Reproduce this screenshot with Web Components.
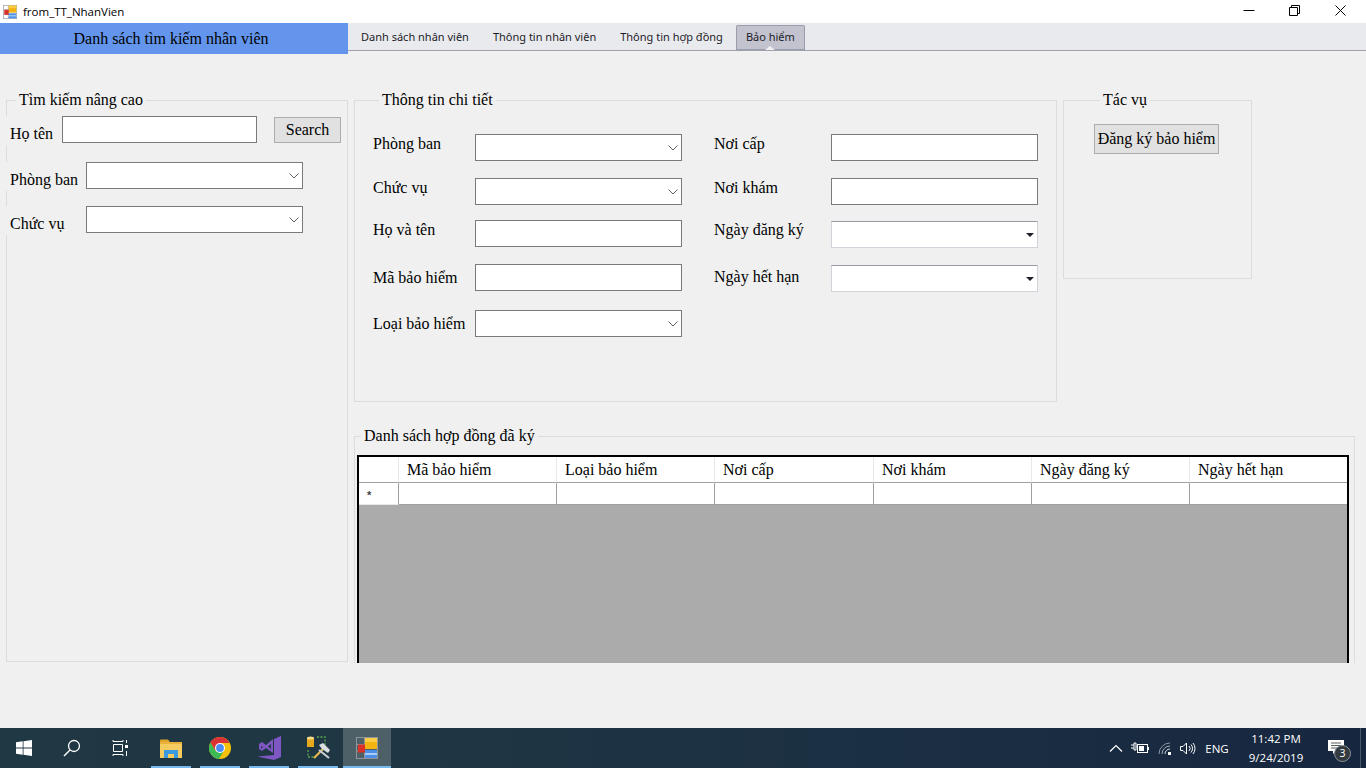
<!DOCTYPE html>
<html lang="vi">
<head>
<meta charset="utf-8">
<title>from_TT_NhanVien</title>
<style>
html,body{margin:0;padding:0;height:100%;overflow:hidden;background:#f0f0f0}
body{font:16px "Liberation Serif","Times New Roman",serif;color:#000}
</style>
</head>
<body>
<template id="t-app-icon">
<style>:host{display:inline-flex}svg{display:block;width:var(--s,14px);height:var(--s,14px)}</style>
<svg viewBox="0 0 22 22"><rect x=".5" y=".5" width="21" height="21" fill="none" stroke="#8f979b"/><path d="M.5 7.5h8M8.5.5v21M.5 14h8" stroke="#8f979b" fill="none"/><rect x="9" y="1" width="12" height="11" fill="#f3b40f"/><rect x="9" y="1" width="12" height="4" fill="#f8cc45"/><rect x="2" y="7.5" width="7" height="8" fill="#d9302a"/><rect x="9" y="13" width="12" height="8" fill="#4d8fe8"/><rect x="9" y="16" width="12" height="2" fill="#a9cdf7"/></svg>
</template>

<script>
function def(name, html, init){
  customElements.define(name, class extends HTMLElement{
    connectedCallback(){
      if(this.shadowRoot) return;
      const r=this.attachShadow({mode:'open'});
      r.innerHTML=typeof html==='function'?html(this):html;
    }
  });
}
def('app-icon',()=>document.getElementById('t-app-icon').innerHTML);

def('title-bar',`<style>
:host{display:flex;align-items:center;height:23px;background:#fff;padding-left:3px;font:11.5px "Open Sans",sans-serif;color:#000;flex:none}
.t{margin-left:6px;flex:1}
.c{display:flex}
.c svg{display:block;width:46px;height:23px}
</style><app-icon></app-icon><span class="t"><slot></slot></span>
<div class="c">
<svg viewBox="0 0 46 23"><path d="M17.5 10.5h11" stroke="#000" fill="none"/></svg>
<svg viewBox="0 0 46 23"><path d="M17.500 7.500h8v8h-8zM19.500 7.500v-2h8v8h-2" stroke="#000" fill="none"/></svg>
<svg viewBox="0 0 46 23" style="margin-right:2px"><path d="M17.500 5.500l10 10M27.500 5.500l-10 10" stroke="#000" fill="none"/></svg>
</div>`);

def('tab-strip',`<style>
:host{display:flex;flex:1;align-items:flex-end;height:27px;background:#e9eaee;border-bottom:1px solid #a0a1b0;padding-left:3px;gap:4px;font:11px "Noto Sans","Open Sans",sans-serif;color:#1c1c28;box-sizing:content-box}
</style><slot></slot>`);

def('tab-item',()=>`<style>
:host{display:flex;align-items:center;height:25px;padding:0 10px;box-sizing:border-box;position:relative;white-space:nowrap;padding-bottom:2px}
:host([active]){background:#c2c3cf;box-shadow:inset 0 0 0 1px #9c9dab;border-radius:2px 2px 0 0;margin-left:-1px}
:host([active])::after{content:"";position:absolute;left:50%;bottom:0;margin-left:-5px;border:5px solid transparent;border-top:0;border-bottom:4px solid #f0f0f0}
</style><slot></slot>`);

def('app-head',`<style>
:host{display:flex;height:31px;flex:none;align-items:flex-start}
.b{width:348px;height:31px;background:#6495ed;display:flex;align-items:center;justify-content:center;padding-right:6px;box-sizing:border-box;flex:none}
</style><div class="b"><slot name="title"></slot></div><slot></slot>`);

def('group-box',()=>`<style>
:host{display:block;box-sizing:border-box}
fieldset{margin:0;height:100%;box-sizing:border-box;border:1px solid #dcdcdc;padding:var(--pad,0);min-width:0}
:host([open]) fieldset{border-bottom:0}
legend{padding:0 3px;margin-left:6px;line-height:18px;font-size:16px}
</style><fieldset><legend><slot name="legend"></slot></legend><slot></slot></fieldset>`);

def('form-row',`<style>
:host{display:flex;align-items:center}
.l{width:var(--lw);flex:none;box-sizing:border-box;white-space:nowrap}
:host([edge]) .l{margin-left:-4px;padding-left:4px;background:#f0f0f0;width:calc(var(--lw) + 4px);line-height:22px}
</style><div class="l" part="l"><slot name="label"></slot></div><slot></slot>`);

const chevron=`<svg width="10" height="6" viewBox="0 0 10 6"><path d="M.5.500L5 5 9.500.500" fill="none" stroke="#606060"/></svg>`;
def('win-field',el=>{
  const k=el.getAttribute('kind')||'text';
  const inner=k==='combo'?chevron:k==='date'?`<svg width="8" height="4" viewBox="0 0 8 4"><path d="M0 0h8L4 4z" fill="#202028"/></svg>`:'';
  return `<style>
:host{display:flex;align-items:center;justify-content:flex-end;box-sizing:border-box;width:var(--w,207px);height:27px;background:#fff;border:1px solid #7a7a7a;flex:none}
:host([kind=combo]){padding-right:3px}
:host([kind=date]){border:1px solid #d2d2da;border-top-color:#9a9aa4;padding-right:3px}
</style>${inner}`;
});

def('win-button',`<style>
:host{display:flex;align-items:center;justify-content:center;box-sizing:border-box;background:#e1e1e1;border:1px solid #adadad;flex:none;white-space:nowrap}
</style><slot></slot>`);

def('data-grid',el=>{
  const heads=(el.getAttribute('cols')||'').split('|');
  const cell=(t,i)=>`<div class="h">${t}</div>`;
  return `<style>
:host{display:flex;flex-direction:column;box-sizing:border-box;flex:1;min-height:0;margin:10px 5px 0 2px;border:2px solid #000;border-bottom:0;background:#ababab;overflow:hidden}
.g{display:grid;grid-template-columns:40px 158px 158px 159px 158px 158px 1fr;background:#fff}
.h{height:26px;box-sizing:border-box;border-right:1px solid #e8e8e8;border-bottom:1px solid #a0a0a0;padding:3px 0 0 8px;line-height:20px;white-space:nowrap}
.h:first-child{padding:0}
.h:nth-child(7){border-right:0}
.c{height:22px;box-sizing:border-box;border-right:1px solid #a0a0a0;border-bottom:1px solid #a0a0a0}
.c:nth-child(14){border-right:0}
.r{border-bottom-color:#e8e8e8;font:bold 11px/24px "Liberation Sans",sans-serif;padding-left:8px;color:#444}
</style><div class="g"><div class="h"></div>${heads.map(cell).join('')}
<div class="c r">*</div><div class="c"></div><div class="c"></div><div class="c"></div><div class="c"></div><div class="c"></div><div class="c"></div></div>`;
});

def('task-bar',`<style>
:host{display:flex;align-items:stretch;height:40px;flex:none;background:linear-gradient(90deg,#203843 0,#1f3644 30%,#1a2d42 75%,#17263f 100%);color:#fff}
</style><slot></slot>`);

def('task-btn',`<style>
:host{display:flex;align-items:center;justify-content:center;width:40px;box-sizing:border-box;margin-right:9px;flex:none}
:host([plain]){width:48px;margin:0}
:host([open]){border-bottom:2px solid #76b9ed;padding-top:2px}
:host([active]){width:48px;margin:0 0 0 -4px;background:#4d5f67;border-bottom:2px solid #76b9ed;padding-top:2px}
</style><slot></slot>`);

def('sys-tray',`<style>
:host{display:flex;align-items:center;margin-left:auto;font:12px "Open Sans",sans-serif;color:#fff;height:40px}
.i{display:flex;align-items:center;justify-content:center}
.clock{width:76px;text-align:center;line-height:19px;font-size:11.5px;margin-left:6px}
.eng{width:30px;text-align:center;margin-left:4px;font-size:11.5px}
.badge{position:absolute;left:14px;top:17px;width:15px;height:15px;border-radius:50%;background:#333a40;border:1px solid #8b9097;font:10.500px/15px "Open Sans",sans-serif;text-align:center;color:#fff}
.n{position:relative;width:40px;height:40px;margin-left:6px;margin-right:0}
.n svg{position:absolute;left:8px;top:12px}
.edge{width:1px;height:40px;background:#4a5668;margin-left:0;margin-right:5px}
</style>
<div class="i" style="width:24px"><svg width="14" height="8" viewBox="0 0 14 8"><path d="M1 7.500l6-6 6 6" fill="none" stroke="#fff" stroke-width="1.200"/></svg></div>
<div class="i" style="width:24px"><svg width="18" height="12" viewBox="0 0 18 12"><path d="M0 3h3M0 6h3M3 1v7h2V1zM5.500 4.500H7" stroke="#fff" fill="none"/><rect x="6.500" y="2.500" width="10" height="8" fill="none" stroke="#fff"/><rect x="8" y="4" width="5" height="5" fill="#fff"/><rect x="17" y="5" width="1" height="3" fill="#fff"/></svg></div>
<div class="i" style="width:26px"><svg width="14" height="13" viewBox="0 0 14 13"><g fill="none" stroke="#8d97a3"><path d="M1 12A11 11 0 0 1 12 1"/><path d="M4 12a8 8 0 0 1 8-8" stroke="#aab2bc"/><path d="M7 12a5 5 0 0 1 5-5" stroke="#d8dce0"/></g><rect x="10" y="10" width="3" height="3" fill="#fff"/></svg></div>
<div class="i" style="width:20px"><svg width="16" height="13" viewBox="0 0 16 13"><path d="M.5 4.500h2.500l3.500-3.500v11l-3.500-3.500H.5zM9 4a3.500 3.500 0 0 1 0 5M11 2.500a6 6 0 0 1 0 8M13 1a8.500 8.500 0 0 1 0 11" fill="none" stroke="#fff"/></svg></div>
<div class="eng">ENG</div>
<div class="clock">11:42 PM<br>9/24/2019</div>
<div class="n"><svg width="16" height="14" viewBox="0 0 16 14"><path d="M0 0h16v11H8l-3 3v-3H0z" fill="#fff"/><path d="M3 3h10M3 5.500h10M3 8h7" stroke="#333" stroke-width=".8"/></svg><div class="badge">3</div></div>
<div class="edge"></div>`);

def('app-shell',`<style>
:host{display:flex;flex-direction:column;height:768px;width:1366px;overflow:hidden;background:#f0f0f0}
.m{flex:1;min-height:0;display:grid;grid-template-columns:342px 1001px;column-gap:6px;padding:37px 0 0 6px;align-items:start;box-sizing:border-box}
</style><slot name="title"></slot><slot name="head"></slot><div class="m"><slot></slot></div><slot name="task"></slot>`);
</script>

<app-shell>
  <title-bar slot="title">from_TT_NhanVien</title-bar>
  <app-head slot="head">
    <span slot="title">Danh sách tìm kiếm nhân viên</span>
    <tab-strip>
      <tab-item>Danh sách nhân viên</tab-item>
      <tab-item>Thông tin nhân viên</tab-item>
      <tab-item>Thông tin hợp đồng</tab-item>
      <tab-item active>Bảo hiểm</tab-item>
    </tab-strip>
  </app-head>

  <group-box style="height:571px;--pad:7px 0 0 3px">
    <span slot="legend">Tìm kiếm nâng cao</span>
    <form-row edge style="--lw:52px;align-items:flex-start">
      <span slot="label" style="display:block;margin-top:7px">Họ tên</span>
      <win-field style="--w:195px"></win-field>
      <win-button style="width:67px;height:26px;margin:1px 0 0 17px">Search</win-button>
    </form-row>
    <form-row edge style="--lw:76px;margin-top:17px;align-items:flex-start">
      <span slot="label" style="display:block;margin-top:7px">Phòng ban</span>
      <win-field kind="combo" style="--w:217px"></win-field>
    </form-row>
    <form-row edge style="--lw:76px;margin-top:15px;align-items:flex-start">
      <span slot="label" style="display:block;margin-top:7px">Chức vụ</span>
      <win-field kind="combo" style="--w:217px"></win-field>
    </form-row>
  </group-box>

  <div style="display:flex;flex-direction:column">
    <div style="display:flex;gap:6px;align-items:flex-start">
      <group-box style="width:703px;height:311px;--pad:25px 0 0 18px">
        <span slot="legend">Thông tin chi tiết</span>
        <div style="display:flex;gap:32px;align-items:flex-start">
          <div style="--lw:102px">
            <form-row><span slot="label" style="display:block;margin-bottom:7px">Phòng ban</span><win-field kind="combo"></win-field></form-row>
            <form-row style="margin-top:17px"><span slot="label" style="display:block;margin-bottom:7px">Chức vụ</span><win-field kind="combo"></win-field></form-row>
            <form-row style="margin-top:15px"><span slot="label" style="display:block;margin-bottom:7px">Họ và tên</span><win-field></win-field></form-row>
            <form-row style="margin-top:17px"><span slot="label" style="display:block">Mã bảo hiểm</span><win-field></win-field></form-row>
            <form-row style="margin-top:19px"><span slot="label" style="display:block">Loại bảo hiểm</span><win-field kind="combo"></win-field></form-row>
          </div>
          <div style="--lw:117px">
            <form-row><span slot="label" style="display:block;margin-bottom:7px">Nơi cấp</span><win-field></win-field></form-row>
            <form-row style="margin-top:17px"><span slot="label" style="display:block;margin-bottom:7px">Nơi khám</span><win-field></win-field></form-row>
            <form-row style="margin-top:16px"><span slot="label" style="display:block;margin-bottom:9px">Ngày đăng ký</span><win-field kind="date"></win-field></form-row>
            <form-row style="margin-top:17px"><span slot="label" style="display:block;margin-bottom:3px">Ngày hết hạn</span><win-field kind="date"></win-field></form-row>
          </div>
        </div>
      </group-box>
      <group-box style="width:189px;height:188px;--pad:15px 0 0 30px">
        <span slot="legend">Tác vụ</span>
        <win-button style="width:125px;height:30px">Đăng ký bảo hiểm</win-button>
      </group-box>
    </div>
    <group-box open style="margin-top:25px;height:236px;width:1001px">
      <span slot="legend">Danh sách hợp đồng đã ký</span>
      <div style="display:flex;flex-direction:column;height:218px">
        <data-grid cols="Mã bảo hiểm|Loại bảo hiểm|Nơi cấp|Nơi khám|Ngày đăng ký|Ngày hết hạn"></data-grid>
      </div>
    </group-box>
  </div>

  <task-bar slot="task">
    <task-btn plain><svg width="16" height="16" viewBox="0 0 16 16" fill="#fff"><path d="M0 2.300L6.700 1.300V7.600H0zM7.500 1.200L16 0V7.600H7.500zM0 8.400H6.700V14.700L0 13.700zM7.500 8.400H16V16L7.500 14.800z"/></svg></task-btn>
    <task-btn plain><svg width="18" height="18" viewBox="0 0 18 18"><circle cx="11" cy="7" r="5.500" fill="none" stroke="#fff" stroke-width="1.300"/><path d="M7 11L1 17" stroke="#fff" stroke-width="1.500"/></svg></task-btn>
    <task-btn plain style="margin-right:7px"><svg width="17" height="16" viewBox="0 0 17 16" fill="none" stroke="#fff"><path d="M1 1.500h10M1 14.500h10M1.500 4.500h9v7h-9zM14.500 0v3M14.500 11v5M1 0v1.500M11 0v1.500M1 14.500V16M11 14.500V16"/><rect x="13" y="5" width="3" height="3" fill="#fff" stroke="none"/></svg></task-btn>
    <task-btn open><svg width="22" height="19" viewBox="0 0 22 19"><path d="M0 1.500A1 1 0 0 1 1 .500h7l2 2.500H0z" fill="#e0a526"/><path d="M0 3h22v16H0z" fill="#f6cb5f"/><path d="M0 3h22v2H0z" fill="#e9b23c"/><path d="M4 19v-8h14v8h-4v-4H8v4z" fill="#3c9be0"/></svg></task-btn>
    <task-btn open><svg width="22" height="22" viewBox="0 0 22 22"><circle cx="11" cy="11" r="11" fill="#f4c20d"/><path d="M11 0A11 11 0 0 0 1.500 5.500L6.200 13.700 11 6h9.500A11 11 0 0 0 11 0z" fill="#db3236"/><path d="M1.500 5.500A11 11 0 0 0 10 22l4.800-8.300L6.200 13.700z" fill="#3cba54"/><circle cx="11" cy="11" r="5" fill="#fff"/><circle cx="11" cy="11" r="3.900" fill="#4c8bf5"/></svg></task-btn>
    <task-btn open><svg width="24" height="24" viewBox="0 0 24 24" fill="#7e57c2"><path d="M17 3L24 0V21L17 24L0 20.500L17 19z"/><path fill-rule="evenodd" d="M2 8L5 6L9 9L16 3V17L9 12L5 15L2 13zM4 10V12.500L6 11.200zM11 10.500L14 13V8z"/></svg></task-btn>
    <task-btn open><svg width="24" height="24" viewBox="0 0 24 24"><rect x="1" y="2" width="7" height="9" fill="#e5a91e"/><ellipse cx="4.500" cy="2" rx="3.500" ry="1.500" fill="#f4dc8a"/><path d="M11 1h8v8M2 14v7h8" fill="none" stroke="#57a64a" stroke-width="1.300" stroke-dasharray="2 1.500"/><path d="M8 22L17 13" stroke="#e7b84a" stroke-width="2.200"/><path d="M13 9l4-2 7 7-2 3-6-4z" fill="#d9dee2"/><path d="M23 22L13 14" stroke="#c8ced3" stroke-width="2.200"/></svg></task-btn>
    <task-btn active><app-icon style="--s:22px"></app-icon></task-btn>
    <sys-tray></sys-tray>
  </task-bar>
</app-shell>
</body>
</html>
